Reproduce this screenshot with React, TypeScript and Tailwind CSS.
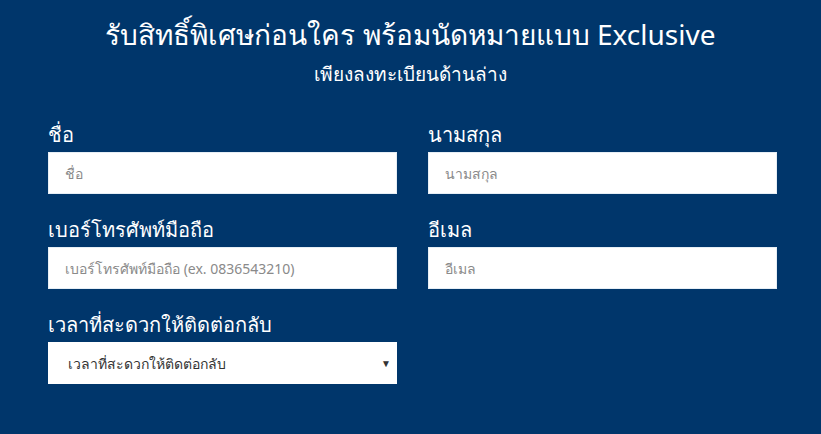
import React from "react";

const font = { fontFamily: '"Noto Sans", "Liberation Sans", sans-serif' };

const Field = ({ label, placeholder }: { label: string; placeholder: string }) => (
  <div className="flex flex-col">
    <label className="text-white text-[20px] leading-[28px] h-[28px] mb-[3px]">{label}</label>
    <input
      className="h-[42px] bg-white px-4 text-[14px] text-gray-700 placeholder-[#8a8a8a] outline-none border border-[#e6eef5]"
      placeholder={placeholder}
    />
  </div>
);

export default function App() {
  return (
    <div className="w-[821px] h-[434px] bg-[#00366b] overflow-hidden" style={font}>
      <div className="pt-[14px] text-center text-white">
        <h1 className="text-[28px] leading-[40px]">รับสิทธิ์พิเศษก่อนใคร พร้อมนัดหมายแบบ Exclusive</h1>
        <p className="text-[19px] leading-[28px] mt-[6px]">เพียงลงทะเบียนด้านล่าง</p>
      </div>
      <div className="ml-[48px] w-[729px] mt-[33px] grid grid-cols-2 gap-x-[31px] gap-y-[22px]">
        <Field label="ชื่อ" placeholder="ชื่อ" />
        <Field label="นามสกุล" placeholder="นามสกุล" />
        <Field label="เบอร์โทรศัพท์มือถือ" placeholder="เบอร์โทรศัพท์มือถือ (ex. 0836543210)" />
        <Field label="อีเมล" placeholder="อีเมล" />
        <div className="flex flex-col">
          <label className="text-white text-[20px] leading-[28px] h-[28px] mb-[3px]">เวลาที่สะดวกให้ติดต่อกลับ</label>
          <div className="h-[42px] bg-white flex items-center justify-between pl-[20px] pr-[6px] text-[14px] text-[#333]">
            <span>เวลาที่สะดวกให้ติดต่อกลับ</span>
            <span className="text-[10px] text-[#333]">▼</span>
          </div>
        </div>
      </div>
    </div>
  );
}
